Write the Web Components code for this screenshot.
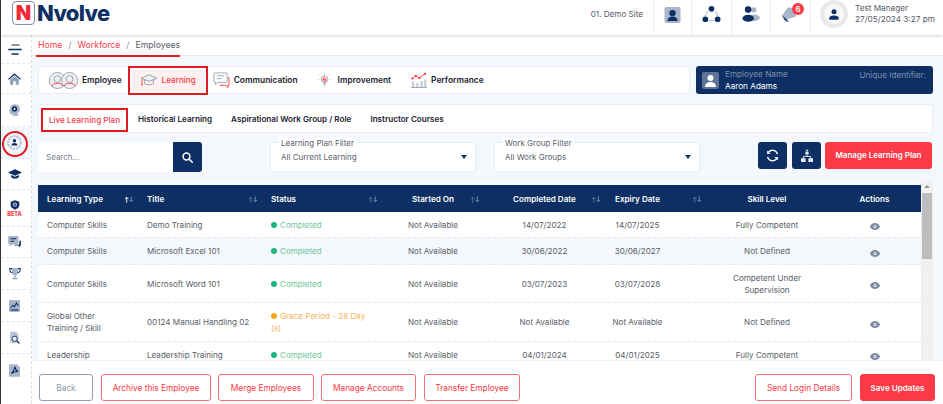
<!DOCTYPE html>
<html>
<head>
<meta charset="utf-8">
<title>Nvolve</title>
<style>
  html, body { margin: 0; height: 100%; overflow: hidden; }
  body {
    font-family: "Inter", "Liberation Sans", sans-serif;
    background: #f4f7fb;
    color: #4d5560;
    border-left: 1px solid #333;
    box-sizing: border-box;
  }
  nv-shell { width: 942px; height: 404px; }
</style>
</head>
<body>
<nv-shell>
  <nv-header slot="header"></nv-header>
  <nv-sidebar slot="sidebar"></nv-sidebar>
  <nv-crumbs></nv-crumbs>
  <div style="display:flex;gap:6px;margin:10px 10px 0 6px;height:28px">
    <nv-tabs style="flex:1"></nv-tabs>
    <nv-person></nv-person>
  </div>
  <nv-subnav></nv-subnav>
  <nv-filters></nv-filters>
  <nv-table></nv-table>
  <nv-footer></nv-footer>
</nv-shell>

<script>
const navy = '#0d2f63';
const red = '#fb3a45';
const icons = {
  staff: `<svg width="17" height="16" viewBox="0 0 17 17"><rect width="17" height="17" rx="2" fill="#a9b6ca"/><circle cx="8.5" cy="6.5" r="3.4" fill="${navy}"/><path d="M3 15c.4-3.6 2.6-5 5.5-5s5.1 1.400 5.500 5z" fill="${navy}"/></svg>`,
  network: `<svg width="19" height="17" viewBox="0 0 20 18"><path d="M6 5 3 11M14 5l3 6M7 15.500h6" stroke="#a9b6ca" stroke-width="1" fill="none"/><circle cx="10" cy="3" r="3" fill="${navy}"/><circle cx="3.5" cy="14" r="3" fill="${navy}"/><circle cx="16.500" cy="14" r="3" fill="${navy}"/></svg>`,
  people: `<svg width="18" height="17" viewBox="0 0 19 18"><circle cx="12.500" cy="4" r="2.800" fill="#a9b6ca"/><ellipse cx="13" cy="12.500" rx="5.800" ry="3.400" fill="#a9b6ca"/><circle cx="6.500" cy="3.800" r="3.500" fill="${navy}"/><ellipse cx="6.500" cy="13" rx="6" ry="3.800" fill="${navy}"/></svg>`,
  bell: `<svg width="16" height="16" viewBox="0 0 15 15"><path d="M1 8 6 1c2.500-1.300 6 .5 7.500 3.500l.5 4.500L3 12.500z" fill="#a9b6ca"/><path d="M1 8l3 5 1.800-1z" fill="${navy}"/><path d="M4 12.500c.5 1.800 2.800 1.800 3.300.3z" fill="${navy}"/></svg>`,
  user: `<svg width="10" height="13" viewBox="0 0 14 15"><circle cx="7" cy="3.700" r="3.500" fill="${navy}"/><path d="M0 14c0-3.500 3-5 7-5s7 1.500 7 5c-2 1-12 1-14 0z" fill="${navy}"/></svg>`,
  menu: `<svg width="14" height="11" viewBox="0 0 14 11"><path d="M4 1h7" stroke="#66778f" stroke-width="1.500" stroke-linecap="round"/><path d="M1 5.500h12" stroke="${navy}" stroke-width="1.700" stroke-linecap="round"/><path d="M4 10h6" stroke="${navy}" stroke-width="1.500" stroke-linecap="round"/></svg>`,
  home: `<svg width="13" height="12" viewBox="0 0 15 13"><path d="M7.500 0 0 6.500l1 1 6.500-5.600L14 7.500l1-1z" fill="${navy}"/><path d="M2.500 7.200 7.500 3l5 4.200V13H9V9H6v4H2.500z" fill="#8fa0b8"/></svg>`,
  head: `<svg width="11" height="13" viewBox="0 0 14 16"><path d="M7 0c4 0 7 2.600 7 6.300 0 2.400-1.300 3.700-2.500 4.700v4H5v-2H2.500c-.8 0-1.300-.6-1.300-1.400V9.500L0 8.800l1.200-2.500C1.300 2.500 3.500 0 7 0z" fill="#a9b6ca"/><circle cx="7" cy="6" r="3.300" fill="${navy}"/><circle cx="7" cy="6" r="1.300" fill="#fff"/></svg>`,
  badge: `<svg width="15" height="15" viewBox="0 0 15 15"><circle cx="7.500" cy="7.500" r="6.300" fill="none" stroke="#b4c0d2" stroke-width="2" stroke-dasharray="2.200 .9"/><circle cx="7.500" cy="7.500" r="5" fill="#f3f5f9"/><circle cx="7.500" cy="5.800" r="1.700" fill="${navy}"/><path d="M4.500 10.500c.3-1.700 1.400-2.400 3-2.400s2.700.7 3 2.400z" fill="${navy}"/></svg>`,
  cap: `<svg width="14" height="10" viewBox="0 0 18 12"><path d="M9 0 18 4.200 9 8.400 0 4.200z" fill="${navy}"/><path d="M4 7.200 9 9.500l5-2.300V10c-2 2.600-8 2.600-10 0z" fill="${navy}"/></svg>`,
  shield: `<svg width="10" height="10" viewBox="0 0 14 13"><path d="M7 0l6 2v5c0 3-3 5-6 6-3-1-6-3-6-6V2z" fill="${navy}"/><circle cx="7" cy="6" r="3" fill="#a9b6ca"/><circle cx="7" cy="6" r="1.300" fill="${navy}"/></svg>`,
  chat: `<svg width="13" height="12" viewBox="0 0 16 15"><path d="M1.500 0h10C12.300 0 13 .7 13 1.500V9c0 .8-.7 1.500-1.500 1.500H5L2 13v-2.500h-.5C.7 10.500 0 9.800 0 9V1.500C0 .7.700 0 1.500 0z" fill="#a9b6ca"/><path d="M3 3.500h7M3 6.500h4.500" stroke="${navy}" stroke-width="1.300"/><path d="M14 6h2v6h-1v2.500L12.500 12H7.500l1.500-1h4c.5 0 1-.5 1-1z" fill="${navy}"/></svg>`,
  trophy: `<svg width="12" height="13" viewBox="0 0 16 17"><path d="M4 1h8v6c0 2.500-1.800 4-4 4S4 9.500 4 7z" fill="#a9b6ca"/><path d="M4 2H1c0 3 1 5 3.500 5.500M12 2h3c0 3-1 5-3.500 5.500" stroke="${navy}" stroke-width="1.400" fill="none"/><path d="M7 11h2v3H7zM4.500 14.500h7V16h-7z" fill="#8fa0b8"/></svg>`,
  chart: `<svg width="11" height="12" viewBox="0 0 14 15"><rect width="14" height="15" rx="1.500" fill="#a9b6ca"/><path d="M2 10l3-3.500 2 2 2.500-5 2.500 4" stroke="${navy}" stroke-width="1.300" fill="none"/><path d="M2 12.500h10" stroke="${navy}" stroke-width="1.400"/></svg>`,
  audit: `<svg width="12" height="14" viewBox="0 0 16 17"><path d="M1.500 0H9l3.500 3.500V15h-11z" fill="#b9c4d4"/><circle cx="7.500" cy="9.500" r="3.500" fill="#e9edf3" stroke="${navy}" stroke-width="1.200"/><path d="M10.300 12.300 14 15.800" stroke="${navy}" stroke-width="1.600"/></svg>`,
  pdf: `<svg width="11" height="13" viewBox="0 0 14 16"><path d="M0 0h10l4 4v12H0z" fill="#a9b6ca"/><path d="M7.500 3c-.5 3-2 6.500-4.500 9 3-2 6-3 8.500-2.500C9.500 8.500 8 6 7.500 3z" fill="none" stroke="${navy}" stroke-width="1.300"/></svg>`,
  search: `<svg width="11" height="11" viewBox="0 0 11 11"><circle cx="4.500" cy="4.500" r="3.400" fill="none" stroke="#fff" stroke-width="1.500"/><path d="M7 7l3.200 3.200" stroke="#fff" stroke-width="1.600" stroke-linecap="round"/></svg>`,
  refresh: `<svg width="13" height="13" viewBox="0 0 14 14"><path d="M12.300 5.500A5.500 5.500 0 0 0 2.800 3.300M1.700 8.500A5.500 5.500 0 0 0 11.200 10.700" fill="none" stroke="#fff" stroke-width="1.500"/><path d="M1.200 1.500v3.800h3.800zM12.800 12.500V8.700H9z" fill="#fff"/></svg>`,
  tree: `<svg width="12" height="13" viewBox="0 0 13 14"><path d="M4.800 3h3.400v3H4.800zM6.500 0l1.500 2.500H5zM0 10h5v4H0zM8 10h5v4H8z" fill="#e6ebf3"/><path d="M6.500 6v2M2.500 10V8h8v2" stroke="#e6ebf3" fill="none"/></svg>`,
  eye: `<svg width="10" height="7" viewBox="0 0 10 7"><path d="M5 0C2.700 0 .9 1.400 0 3.500 .9 5.600 2.700 7 5 7s4.100-1.400 5-3.500C9.100 1.400 7.300 0 5 0z" fill="#7a8a9e"/><circle cx="5" cy="3.500" r="1.600" fill="#fff"/><circle cx="5" cy="3.500" r=".8" fill="#7a8a9e"/></svg>`,
  twoPeople: `<svg width="31" height="17" viewBox="0 0 32 18" fill="none"><circle cx="9.500" cy="9" r="8.500" fill="#eef0f3" stroke="#9aa3af"/><circle cx="22.500" cy="9" r="8.500" fill="#eef0f3" stroke="#9aa3af"/><circle cx="9.500" cy="7.500" r="3.600" stroke="#9aa3af"/><circle cx="22.500" cy="7.500" r="3.600" stroke="#9aa3af"/><path d="M3.500 15c1-2.500 3-3 6-3s5 .5 6 3M16.500 15c1-2.500 3-3 6-3s5 .5 6 3" stroke="${red}"/></svg>`,
  mortar: `<svg width="18" height="14" viewBox="0 0 20 16" fill="none" stroke="#8d97a5"><path d="M10 2 19 6 10 9.500 1 6z" fill="#eef0f3"/><path d="M5 8v4c3 2 7 2 10 0V8"/><path d="M2 7v5" stroke="${red}"/><circle cx="2" cy="13" r="1" fill="${red}" stroke="none"/></svg>`,
  speech: `<svg width="17" height="16" viewBox="0 0 18 17" fill="none"><path d="M2 1h12c.6 0 1 .4 1 1v8c0 .6-.4 1-1 1H5l-2.500 2.500V11H2c-.6 0-1-.4-1-1V2c0-.6.4-1 1-1z" stroke="#9aa3af"/><path d="M4 4h8M4 7h5" stroke="#9aa3af"/><path d="M16 6h1v8h-1v2.500L13 14H7" stroke="${red}"/></svg>`,
  bulb: `<svg width="15" height="15" viewBox="0 0 18 17" fill="none"><circle cx="9" cy="7" r="4" fill="#fde3e3" stroke="#9aa3af"/><path d="M9 5 7.500 7.500h3L9 10" stroke="${red}" stroke-width="1.300"/><path d="M7 12h4M7.500 14h3" stroke="#9aa3af"/><path d="M9 0v1.500M3 2l1 1M15 2l-1 1M1 7h1.500M15.500 7H17" stroke="#b7bdc6"/></svg>`,
  perf: `<svg width="16" height="16" viewBox="0 0 17 17" fill="none"><path d="M1 7l4-3 4 2.500L15 1.500" stroke="${red}"/><circle cx="1.500" cy="7" r="1.200" fill="${red}"/><circle cx="5" cy="4" r="1.200" fill="${red}"/><circle cx="9" cy="6.500" r="1.200" fill="${red}"/><circle cx="15" cy="2" r="1.200" fill="${red}"/><path d="M1 10h2.500v6H1zM5.500 11.500H8V16H5.500zM10 9.500h2.500V16H10zM14 8h2.500v8H14z" fill="#c9ced6"/><path d="M0 16.500h17" stroke="#9aa3af"/></svg>`,
  sort: `<svg width="10" height="7" viewBox="0 0 11 7"><path d="M3 7V1M1 3l2-2 2 2" stroke="currentColor" fill="none"/><path d="M8 0v6M6 4l2 2 2-2" stroke="#7c8fae" fill="none"/></svg>`
};

function define(name, css, html) {
  customElements.define(name, class extends HTMLElement {
    constructor() {
      super();
      this.attachShadow({ mode: 'open' });
      this.shadowRoot.innerHTML = `<style>${css}</style>${html}`;
    }
  });
}

define('nv-shell', `
  :host { display: grid; grid-template-columns: 31px 1fr; grid-template-rows: 35px 1fr; overflow: hidden; }
  ::slotted([slot=header]) { grid-column: 1 / 3; }
  main { display: flex; flex-direction: column; min-width: 0; min-height: 0; position: relative; }
`, `<slot name="header"></slot><slot name="sidebar"></slot><main><slot></slot></main>`);

define('nv-header', `
  :host { display: flex; align-items: stretch; background: #fff; box-shadow: 0 1px 3px rgba(40,60,90,.22); position: relative; z-index: 3; }
  .logo { display: flex; align-items: flex-start; gap: 2px; padding: 1px 0 0 11px; flex: 1; }
  .mark { width: 23px; height: 24px; box-sizing: border-box; border: 1px solid #8090ab; border-radius: 4px; color: #f0283a; font: 900 20px/22px "Inter", sans-serif; text-align: center; }
  .word { color: ${navy}; font: 800 22px/24px "Inter", sans-serif; letter-spacing: -.7px; }
  .site { align-self: center; font-size: 8.1px; color: #555c66; margin: 0 10px 7px 0; }
  .cell { display: flex; align-items: center; justify-content: center; border-left: 1px solid #e9edf3; position: relative; padding-bottom: 6px; box-sizing: border-box; }
  .badge { position: absolute; left: 21px; top: 3px; width: 12px; height: 12px; border-radius: 50%; background: ${red}; color: #fff; font-size: 8px; font-weight: 600; line-height: 12px; text-align: center; }
  .me { display: flex; align-items: flex-start; gap: 7px; width: 133px; padding-left: 9px; box-sizing: border-box; border-left: 1px solid #e9edf3; }
  .avatar { width: 20px; height: 20px; border: 4px solid #e9e9e9; border-radius: 50%; background: #f7f7f7; display: flex; align-items: center; justify-content: center; flex: none; }
  .who { font-size: 8.2px; line-height: 11px; color: #555c66; padding-top: 3px; white-space: nowrap; }
`, `
  <div class="logo"><div class="mark">N</div><div class="word">Nvolve</div></div>
  <div class="site">01. Demo Site</div>
  <div class="cell" style="width:38px">${icons.staff}</div>
  <div class="cell" style="width:40px">${icons.network}</div>
  <div class="cell" style="width:39px">${icons.people}</div>
  <div class="cell" style="width:40px;padding-right:4px">${icons.bell}<span class="badge">6</span></div>
  <div class="me"><div class="avatar">${icons.user}</div><div class="who">Test Manager<br>27/05/2024 3:27 pm</div></div>
`);

define('nv-sidebar', `
  :host { display: flex; flex-direction: column; background: #fff; border-right: 1px dashed #d6e0ee; }
  div { display: flex; flex-direction: column; align-items: center; justify-content: center; border-bottom: 1px dashed #e1e8f2; position: relative; flex: none; box-sizing: border-box; padding-right: 3px; }
  b { font: 800 5.5px/6px "Inter", sans-serif; color: ${red}; margin-top: 1px; }
  .sel { background: #f3f6fb; }
  .ring { position: absolute; left: 1px; top: 4px; width: 22px; height: 22px; border: 2px solid #e11b22; border-radius: 50%; }
`, `
  <div style="height:29px">${icons.menu}</div>
  <div style="height:30px">${icons.home}</div>
  <div style="height:33px">${icons.head}</div>
  <div class="sel" style="height:32px">${icons.badge}<span class="ring"></span></div>
  <div style="height:31px">${icons.cap}</div>
  <div style="height:37px">${icons.shield}<b>BETA</b></div>
  <div style="height:31px">${icons.chat}</div>
  <div style="height:32px">${icons.trophy}</div>
  <div style="height:32px">${icons.chart}</div>
  <div style="height:32px">${icons.audit}</div>
  <div style="height:32px;border:0">${icons.pdf}</div>
`);

define('nv-crumbs', `
  :host { display: flex; height: 21px; flex: none; box-sizing: border-box; background: #fff; border-bottom: 1px solid #e3eaf3; padding-left: 4px; }
  div { display: flex; align-items: center; gap: 6px; width: 144px; height: 22px; flex: none; box-sizing: border-box; padding: 0 0 1px 2px; font-size: 8.7px; border-bottom: 2px solid #e11b22; color: #8a909a; }
  a { color: ${red}; }
`, `<div><a>Home</a><span>/</span><a>Workforce</a><span>/</span><span style="color:#5a6068">Employees</span></div>`);

define('nv-tabs', `
  :host { display: flex; align-items: center; background: #fff; border: 1px solid #e9eef6; border-radius: 3px; padding-left: 9px; box-sizing: border-box; }
  span { display: flex; align-items: center; font-size: 8.4px; font-weight: 600; color: #1c2430; white-space: nowrap; }
  .box { border: 2px solid #e11b22; height: 29px; width: 80px; box-sizing: border-box; padding: 2px 2px 2px 1px; margin: 0 5px 0 6px; flex: none; }
  .on { color: ${red}; background: #fdf0f0; height: 100%; width: 100%; box-sizing: border-box; padding-left: 9px; gap: 4px; border-radius: 2px; font-weight: 500; font-size: 8.1px; }
`, `
  <span style="gap:3px">${icons.twoPeople}Employee</span>
  <span class="box"><span class="on">${icons.mortar}Learning</span></span>
  <span style="gap:4px;margin-right:19px">${icons.speech}Communication</span>
  <span style="gap:6px;margin-right:20px">${icons.bulb}Improvement</span>
  <span style="gap:4px">${icons.perf}Performance</span>
`);

define('nv-person', `
  :host { display: flex; align-items: center; width: 237px; flex: none; background: ${navy}; border-radius: 3px; color: #fff; padding: 0 7px 0 6px; box-sizing: border-box; gap: 6px; font-size: 8.2px; }
  i { width: 17px; height: 17px; border-radius: 2px; background: #5d7498; display: flex; align-items: center; justify-content: center; flex: none; }
  .n { flex: 1; line-height: 12px; }
  small { display: block; font-size: 8.2px; color: #7b8fae; }
  .u { color: #7b8fae; align-self: flex-start; margin-top: 3px; line-height: 12px; }
`, `
  <i><svg width="13" height="13" viewBox="0 0 13 13"><circle cx="6.500" cy="4" r="3" fill="#fff"/><path d="M1 13c0-3.500 2.500-5 5.500-5s5.500 1.500 5.500 5z" fill="#fff"/></svg></i>
  <div class="n"><small>Employee Name</small>Aaron Adams</div>
  <div class="u">Unique Identifier:</div>
`);

define('nv-subnav', `
  :host { display: flex; align-items: center; height: 29px; flex: none; box-sizing: border-box; margin: 10px 10px 0 6px; background: #fff; border: 1px solid #e9eef6; border-radius: 3px; padding-left: 2px; gap: 19px; font-size: 8.15px; font-weight: 600; color: #1c2430; white-space: nowrap; }
  .on { color: ${red}; border: 2px solid #e11b22; box-sizing: border-box; width: 87px; height: 24px; display: flex; align-items: center; justify-content: center; margin: 2px -9px 0 0; font-weight: 500; }
`, `<span class="on">Live Learning Plan</span><span>Historical Learning</span><span>Aspirational Work Group / Role</span><span>Instructor Courses</span>`);

define('nv-filters', `
  :host { display: flex; height: 30px; flex: none; margin: 9px 10px 0 6px; font-size: 8px; color: #5b626c; align-items: flex-start; }
  .search { display: flex; width: 164px; height: 30px; background: #fff; border-radius: 3px; }
  .search span { flex: 1; padding: 0 8px; line-height: 30px; color: #7b828c; }
  .search button { width: 29px; border: 0; border-radius: 0 3px 3px 0; background: ${navy}; display: flex; align-items: center; justify-content: center; }
  .sel { position: relative; width: 206px; height: 30px; box-sizing: border-box; background: #fff; border: 1px solid #e9eef6; border-radius: 3px; padding: 9px 8px 9px 10px; display: flex; justify-content: space-between; align-items: center; }
  .sel label { position: absolute; left: 8px; top: -5px; background: #fff; padding: 0 2px; line-height: 10px; }
  .sel u { width: 0; height: 0; border: 3px solid transparent; border-top: 4px solid ${navy}; border-bottom: 0; }
  .sq { width: 29px; height: 27px; border-radius: 3px; background: ${navy}; display: flex; align-items: center; justify-content: center; margin-right: 5px; }
  .go { width: 107px; height: 27px; border-radius: 3px; background: ${red}; color: #fff; font-weight: 600; text-align: center; line-height: 27px; white-space: nowrap; }
`, `
  <div class="search"><span>Search...</span><button>${icons.search}</button></div>
  <div class="sel" style="margin-left:68px"><label>Learning Plan Filter</label><span>All Current Learning</span><u></u></div>
  <div class="sel" style="margin-left:18px"><label>Work Group Filter</label><span>All Work Groups</span><u></u></div>
  <div class="sq" style="margin-left:58px">${icons.refresh}</div>
  <div class="sq" style="margin-right:4px">${icons.tree}</div>
  <div class="go">Manage Learning Plan</div>
`);

const rows = [
  ['Computer Skills', 'Demo Training', 'ok', 'Not Available', '14/07/2022', '14/07/2025', 'Fully Competent', 26],
  ['Computer Skills', 'Microsoft Excel 101', 'ok', 'Not Available', '30/06/2022', '30/06/2027', 'Not Defined', 27],
  ['Computer Skills', 'Microsoft Word 101', 'ok', 'Not Available', '03/07/2023', '03/07/2028', 'Competent Under<br>Supervision', 38],
  ['Global Other<br>Training / Skill', '00124 Manual Handling 02', 'grace', 'Not Available', 'Not Available', 'Not Available', 'Not Defined', 39],
  ['Leadership', 'Leadership Training', 'ok', 'Not Available', '04/01/2024', '04/01/2025', 'Fully Competent', 26]
];
const statusCell = {
  ok: `<span class="ok"><i></i>Completed</span>`,
  grace: `<span class="gr"><i></i>Grace Period - 28 Day<br>(s)</span>`
};
const cols = '100px 124px 120px 102px 121px 101px 122px 93px';

define('nv-table', `
  :host { display: flex; flex: 1; min-height: 0; margin: 9px 10px 0 6px; font-size: 8.1px; background: #fbfcfe; padding-top: 4px; position: relative; overflow: hidden; }
  .t { width: 883px; flex: none; background: #fff; align-self: flex-start; }
  .r { display: grid; grid-template-columns: ${cols}; align-items: center; border-bottom: 1px dashed #e3e9f2; box-sizing: border-box; line-height: 12px; color: #5a6068; }
  .r:nth-child(3) { background: #f4f8fd; }
  .r > div { padding: 0 9px; }
  .r > .x { padding: 0 36px 0 0; white-space: nowrap; }
  .c { text-align: center; }
  .h { background: ${navy}; color: #fff; font-weight: 600; height: 27px; border: 0; }
  .h > div { position: relative; }
  .h svg { position: absolute; right: 4px; top: 3px; color: #5e7698; }
  .h .up svg { color: #fff; }
  .ok { color: #6cc59a; } .gr { color: #f5b45a; }
  i { display: inline-block; width: 6px; height: 6px; border-radius: 50%; margin-right: 3px; vertical-align: 0; }
  .ok i { background: #1cb57c; } .gr i { background: #fba71b; }
  .r > .eye { padding-top: 4px; line-height: 0; }
  .bar { flex: 1; background: #f0f0f0; position: relative; margin-top: -4px; }
  .thumb { position: absolute; left: 1px; right: 1px; top: 12px; height: 66px; background: #bdbdbd; }
  .arrow { position: absolute; left: 3px; top: 4px; border: 3px solid transparent; border-bottom: 3px solid #9a9a9a; border-top: 0; }
`, `
  <div class="t">
    <div class="r h">
      <div class="up">Learning Type${icons.sort}</div><div>Title${icons.sort}</div><div>Status${icons.sort}</div>
      <div class="c">Started On${icons.sort}</div><div class="c">Completed Date${icons.sort}</div><div class="c x">Expiry Date${icons.sort}</div>
      <div class="c">Skill Level</div><div class="c">Actions</div>
    </div>
    ${rows.map(r => `<div class="r" style="height:${r[7]}px">
      <div>${r[0]}</div><div>${r[1]}</div><div>${statusCell[r[2]]}</div>
      <div class="c">${r[3]}</div><div class="c">${r[4]}</div><div class="c x">${r[5]}</div>
      <div class="c">${r[6]}</div><div class="c eye">${icons.eye}</div></div>`).join('')}
  </div>
  <div class="bar"><span class="arrow"></span><div class="thumb"></div></div>
`);

define('nv-footer', `
  :host { position: absolute; left: 0; right: 0; bottom: 0; height: 44px; display: flex; align-items: flex-start; gap: 7px; box-sizing: border-box; padding: 13px 8px 0 7px; background: #fff; border-top: 1px solid #edf1f7; font-size: 8.3px; z-index: 2; }
  a { height: 27px; box-sizing: border-box; border: 1px solid #fb6d75; border-radius: 3px; color: ${red}; display: flex; align-items: center; justify-content: center; white-space: nowrap; }
  .back { border-color: #8fa0b4; color: #8e99a7; }
  .save { background: ${red}; color: #fff; font-weight: 600; border-color: ${red}; font-size: 8.1px; }
`, `
  <a class="back" style="width:54px">Back</a>
  <a style="width:110px;margin-left:1px">Archive this Employee</a>
  <a style="width:96px">Merge Employees</a>
  <a style="width:95px">Manage Accounts</a>
  <a style="width:96px;margin-left:1px">Transfer Employee</a>
  <a style="width:97px;margin-left:auto">Send Login Details</a>
  <a class="save" style="width:75px;margin-left:1px">Save Updates</a>
`);
</script>
</body>
</html>
